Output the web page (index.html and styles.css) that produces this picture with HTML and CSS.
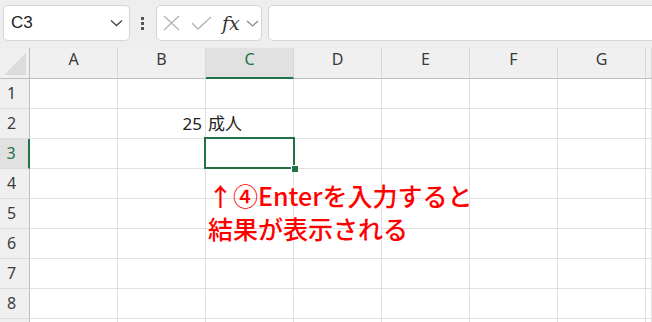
FILE: index.html
```html
<!DOCTYPE html>
<html lang="ja">
<head>
  <meta charset="UTF-8" />
  <title>Sheet</title>
  <link rel="stylesheet" href="styles.css">
</head>
<body>
  <div class="toolbar">
    <div class="namebox">
      <span>C3</span>
      <svg width="13" height="8" viewBox="0 0 13 8"><path d="M1 1.5 L6.5 6.5 L12 1.5" fill="none" stroke="#444" stroke-width="1.3"/></svg>
    </div>
    <div class="dots"><i></i><i></i><i></i></div>
    <div class="fxbox">
      <svg class="ic-x" width="17" height="16" viewBox="0 0 17 16"><path d="M1 1 L16 15 M16 1 L1 15" stroke="#b5b5b5" stroke-width="1.4"/></svg>
      <svg class="ic-ok" width="21" height="14" viewBox="0 0 21 14"><path d="M1 7 L7 13 L20 1" fill="none" stroke="#b5b5b5" stroke-width="1.4"/></svg>
      <span class="fx">fx</span>
      <svg class="ic-dd" width="13" height="7" viewBox="0 0 13 7"><path d="M1 1 L6.5 6 L12 1" fill="none" stroke="#8a8a8a" stroke-width="1.2"/></svg>
    </div>
    <div class="formula"></div>
  </div>

  <div class="sheet">
    <div class="row hrow">
      <div class="rh corner"><span class="tri"></span></div>
      <div class="c">A</div><div class="c">B</div><div class="c on">C</div><div class="c">D</div><div class="c">E</div><div class="c">F</div><div class="c">G</div><div class="c"></div>
    </div>
    <div class="row"><div class="rh">1</div><div class="c"></div><div class="c"></div><div class="c"></div><div class="c"></div><div class="c"></div><div class="c"></div><div class="c"></div><div class="c"></div></div>
    <div class="row"><div class="rh">2</div><div class="c"></div><div class="c num">25</div><div class="c txt">成人</div><div class="c"></div><div class="c"></div><div class="c"></div><div class="c"></div><div class="c"></div></div>
    <div class="row"><div class="rh on">3</div><div class="c"></div><div class="c"></div><div class="c"></div><div class="c"></div><div class="c"></div><div class="c"></div><div class="c"></div><div class="c"></div></div>
    <div class="row"><div class="rh">4</div><div class="c"></div><div class="c"></div><div class="c"></div><div class="c"></div><div class="c"></div><div class="c"></div><div class="c"></div><div class="c"></div></div>
    <div class="row"><div class="rh">5</div><div class="c"></div><div class="c"></div><div class="c"></div><div class="c"></div><div class="c"></div><div class="c"></div><div class="c"></div><div class="c"></div></div>
    <div class="row"><div class="rh">6</div><div class="c"></div><div class="c"></div><div class="c"></div><div class="c"></div><div class="c"></div><div class="c"></div><div class="c"></div><div class="c"></div></div>
    <div class="row"><div class="rh">7</div><div class="c"></div><div class="c"></div><div class="c"></div><div class="c"></div><div class="c"></div><div class="c"></div><div class="c"></div><div class="c"></div></div>
    <div class="row"><div class="rh">8</div><div class="c"></div><div class="c"></div><div class="c"></div><div class="c"></div><div class="c"></div><div class="c"></div><div class="c"></div><div class="c"></div></div>
    <div class="row"><div class="rh"></div><div class="c"></div><div class="c"></div><div class="c"></div><div class="c"></div><div class="c"></div><div class="c"></div><div class="c"></div><div class="c"></div></div>

    <div class="sel"><span class="handle"></span></div>
    <div class="note">↑④Enterを入力すると<br>結果が表示される</div>
  </div>
</body>
</html>
```

FILE: styles.css
```css
body {
  margin: 0;
  width: 652px;
  height: 322px;
  overflow: hidden;
  background: #eeeeee;
  font-family: 'Noto Sans', 'Noto Sans CJK JP', sans-serif;
  color: #3b3b3b;
}
.toolbar {
  display: flex;
  align-items: flex-start;
  height: 48px;
  padding: 5px 0 0 3px;
  box-sizing: border-box;
}
.namebox {
  width: 127px;
  height: 36px;
  box-sizing: border-box;
  border: 1px solid #d6d6d6;
  border-radius: 5px;
  background: #fff;
  display: flex;
  align-items: center;
  justify-content: space-between;
  padding: 0 6px 0 7px;
  font-family: 'Liberation Sans', sans-serif;
  font-size: 17px;
  color: #222;
}
.dots {
  display: flex;
  flex-direction: column;
  gap: 2px;
  margin: 12px 0 0 11px;
}
.dots i {
  display: block;
  width: 3px;
  height: 3px;
  background: #555;
}
.fxbox {
  width: 106px;
  height: 36px;
  box-sizing: border-box;
  margin-left: 12px;
  border: 1px solid #d6d6d6;
  border-radius: 5px;
  background: #fff;
  display: flex;
  align-items: center;
  padding-left: 6px;
}
.ic-ok { margin-left: 11px; }
.fx {
  margin-left: 10px;
  font-family: 'DejaVu Serif', serif;
  font-style: italic;
  font-size: 19px;
  color: #333;
  line-height: 1;
}
.ic-dd { margin-left: 6px; }
.formula {
  flex: 1;
  height: 36px;
  box-sizing: border-box;
  margin: 0 -10px 0 6px;
  border: 1px solid #d6d6d6;
  border-radius: 5px;
  background: #fff;
}
.sheet {
  position: relative;
  background: #fff;
}
.row {
  display: flex;
  height: 30px;
}
.row > div {
  box-sizing: border-box;
  flex: none;
  border-right: 1px solid #e1e1e1;
  border-bottom: 1px solid #e1e1e1;
  font-size: 16px;
}
.rh {
  width: 30px;
  background: #f0f0f0;
  border-right-color: #bdbdbd !important;
  border-bottom-color: #dcdcdc !important;
  text-align: center;
  padding-right: 6px;
  line-height: 29px;
}
.row > .c { width: 88px; }
.row > .c:last-child { flex: 1; }
.hrow { height: 31px; }
.hrow > div {
  background: #f0f0f0;
  border-right-color: #d8d8d8;
  border-bottom-color: #bdbdbd !important;
  text-align: center;
  line-height: 22px;
}
.hrow .corner { position: relative; }
.tri {
  position: absolute;
  left: 4px;
  top: 5px;
  width: 0;
  height: 0;
  border-left: 22px solid transparent;
  border-bottom: 22px solid #dcdcdc;
}
.hrow > .on {
  background: #e1e1e1;
  border-bottom: 2px solid #217346 !important;
  color: #217346;
}
.rh.on {
  background: #e1e1e1;
  border-right: 2px solid #217346 !important;
  color: #217346;
}
.num, .txt {
  font-size: 17px !important;
  line-height: 29px;
  color: #222;
}
.num { text-align: right; padding-right: 3px; }
.txt { padding-left: 2px; }
.sel {
  position: absolute;
  left: 204px;
  top: 89px;
  width: 91px;
  height: 32px;
  box-sizing: border-box;
  border: 2px solid #217346;
}
.handle {
  position: absolute;
  left: 85px;
  top: 26px;
  width: 6px;
  height: 6px;
  background: #217346;
  border-left: 1px solid #fff;
  border-top: 1px solid #fff;
}
.note {
  position: absolute;
  left: 208px;
  top: 131px;
  font-family: 'Noto Sans CJK JP', sans-serif;
  font-size: 25px;
  font-weight: 500;
  line-height: 33px;
  color: #ff0000;
  white-space: nowrap;
}
```
